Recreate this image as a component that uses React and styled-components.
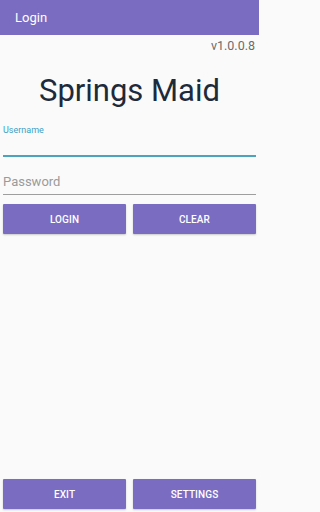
import styled, { createGlobalStyle } from "styled-components"

const Global = createGlobalStyle`
html, body {
    margin: 0;
    padding: 0;
    height: 100%;
    background: #fafafa;
}
body {
    font-family: Roboto, "Noto Sans", sans-serif;
}
#root {
    height: 100%;
}
`

const Pantalla = styled.div`
    display: flex;
    flex-direction: column;
    width: 259px;
    height: 100vh;
    background: #fafafa;
`
const Cabecera = styled.div`
    height: 35px;
    background: #7a6cc0;
    display: flex;
    align-items: center;
    padding-left: 15px;
    color: #ffffff;
    font-size: 13px;
    flex-shrink: 0;
`
const Version = styled.div`
    text-align: right;
    padding: 3px 4px 0 0;
    font-size: 12.5px;
    line-height: 15px;
    color: #6b6b6b;
`
const Titulo = styled.h1`
    margin: 18px 0 0;
    text-align: center;
    font-weight: 400;
    font-size: 31px;
    line-height: 40px;
    color: #1d2a3a;
`
const Formulario = styled.div`
    display: flex;
    flex-direction: column;
    padding: 0 3px;
    margin-top: 14px;
`
const Campo = styled.div`
    display: flex;
    flex-direction: column;
    border-bottom: ${p => (p.$activo ? "2px solid #4ba3bd" : "1px solid #9e9e9e")};
    height: ${p => (p.$activo ? "30px" : "26px")};
    margin-top: ${p => (p.$activo ? "0" : "11px")};
    justify-content: ${p => (p.$activo ? "flex-start" : "flex-end")};
`
const Etiqueta = styled.span`
    font-size: 9px;
    line-height: 11px;
    color: #3c9fc6;
`
const Pista = styled.span`
    font-size: 13px;
    line-height: 16px;
    color: #9a9a9a;
    padding-bottom: 4px;
`
const FilaBotones = styled.div`
    display: flex;
    gap: 7px;
    padding: 0 3px;
    margin-top: ${p => p.$arriba || "0"};
    margin-bottom: ${p => p.$abajo || "0"};
`
const Boton = styled.button`
    flex: 1;
    height: 30px;
    border: none;
    border-radius: 1px;
    background: #7a6cc0;
    color: #ffffff;
    font-family: Roboto, "Noto Sans", sans-serif;
    font-weight: 500;
    font-size: 10px;
    text-transform: uppercase;
    letter-spacing: 0.1px;
    box-shadow: 0 1px 2px rgba(0, 0, 0, 0.2);
    padding: 0;
`
const Relleno = styled.div`
    flex: 1;
`

const App = () => {
    return (
        <>
            <Global />
            <Pantalla>
                <Cabecera>Login</Cabecera>
                <Version>v1.0.0.8</Version>
                <Titulo>Springs Maid</Titulo>
                <Formulario>
                    <Campo $activo>
                        <Etiqueta>Username</Etiqueta>
                    </Campo>
                    <Campo>
                        <Pista>Password</Pista>
                    </Campo>
                </Formulario>
                <FilaBotones $arriba="9px">
                    <Boton>Login</Boton>
                    <Boton>Clear</Boton>
                </FilaBotones>
                <Relleno />
                <FilaBotones $abajo="3px">
                    <Boton>Exit</Boton>
                    <Boton>Settings</Boton>
                </FilaBotones>
            </Pantalla>
        </>
    )
}

export default App
